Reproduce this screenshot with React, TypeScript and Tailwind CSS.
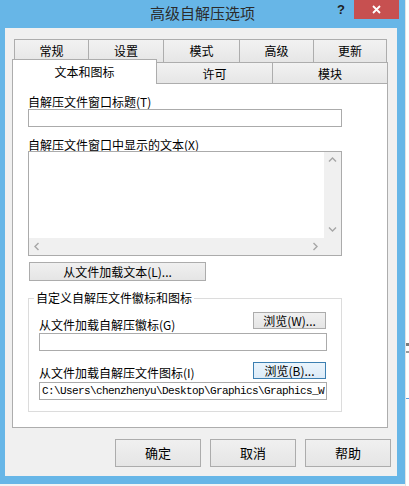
import React from "react";

function Chevron({ dir }: { dir: "up" | "down" | "left" | "right" }) {
  const pts = {
    up: "1,5.5 4.5,2 8,5.5",
    down: "1,2.5 4.5,6 8,2.5",
    left: "5.5,1 2,4.5 5.5,8",
    right: "2.5,1 6,4.5 2.5,8",
  }[dir];
  return (
    <svg width="9" height="9" viewBox="0 0 9 9">
      <polyline points={pts} fill="none" stroke="#a6a6a6" strokeWidth="1.4" />
    </svg>
  );
}

function Label({ children, className = "" }: { children: React.ReactNode; className?: string }) {
  return <div className={`h-[12px] leading-[12px] whitespace-nowrap ${className}`}>{children}</div>;
}

export default function App() {
  return (
    <div className="w-[409px] h-[486px] flex bg-[#f3f3f3] overflow-hidden font-['Noto_Sans_CJK_SC','Noto_Sans',sans-serif] text-[12px] text-black">
      <div className="w-[405px] h-[484px] shrink-0 bg-[#67b6e7] flex flex-col">
        {/* title bar */}
        <div className="h-[28px] shrink-0 grid grid-cols-[1fr_auto_1fr]">
          <div />
          <div className="text-[15px] leading-[17px] pt-[4px] text-[#2b2b2b]">高级自解压选项</div>
          <div className="flex justify-end items-start pr-[6px]">
            <div className="w-[26px] h-[19px] flex items-center justify-center font-['Liberation_Sans',sans-serif] font-bold text-[13px] text-[#1e1e1e]">
              ?
            </div>
            <div className="w-[45px] h-[19px] bg-[#c75050] flex items-center justify-center">
              <svg width="9" height="9" viewBox="0 0 9 9">
                <path d="M1 1 L8 8 M8 1 L1 8" stroke="#ffffff" strokeWidth="1.8" />
              </svg>
            </div>
          </div>
        </div>

        {/* client area */}
        <div className="ml-[5px] w-[392px] h-[448px] bg-[#f0f0f0] flex flex-col">
          {/* back tab row */}
          <div className="ml-[9px] mt-[11px] flex">
            <div className="w-[74px] h-[23px] border-t border-l border-[#adadad] bg-linear-to-b from-[#f2f2f2] to-[#e6e6e6] text-center pt-[5px] leading-[12px]">常规</div>
            <div className="w-[75px] h-[23px] border-t border-l border-[#adadad] bg-linear-to-b from-[#f2f2f2] to-[#e6e6e6] text-center pt-[5px] leading-[12px]">设置</div>
            <div className="w-[76px] h-[23px] border-t border-l border-[#adadad] bg-linear-to-b from-[#f2f2f2] to-[#e6e6e6] text-center pt-[5px] leading-[12px]">模式</div>
            <div className="w-[74px] h-[23px] border-t border-l border-[#adadad] bg-linear-to-b from-[#f2f2f2] to-[#e6e6e6] text-center pt-[5px] leading-[12px]">高级</div>
            <div className="w-[74px] h-[23px] border-t border-l border-r border-[#adadad] bg-linear-to-b from-[#f2f2f2] to-[#e6e6e6] text-center pt-[5px] leading-[12px]">更新</div>
          </div>
          {/* front tab row */}
          <div className="ml-[7px] -mt-[3px] flex items-end relative z-10">
            <div className="w-[145px] h-[25px] -mb-px bg-white border-t border-l border-r border-[#adadad] text-center pt-[6px] leading-[12px]">文本和图标</div>
            <div className="w-[115px] h-[21px] border-t border-[#adadad] bg-linear-to-b from-[#f2f2f2] to-[#e6e6e6] text-center pt-[5px] leading-[12px]">许可</div>
            <div className="w-[116px] h-[21px] border-t border-l border-r border-[#adadad] bg-linear-to-b from-[#f2f2f2] to-[#e6e6e6] text-center pt-[5px] leading-[12px]">模块</div>
          </div>

          {/* tab page */}
          <div className="ml-[7px] w-[376px] h-[345px] shrink-0 bg-white border border-[#adadad] pl-[15px] pt-[12px] flex flex-col items-start">
            <Label>自解压文件窗口标题(T)</Label>
            <div className="mt-[1px] w-[314px] h-[18px] border border-[#ababab] bg-white" />

            <Label className="mt-[12px]">自解压文件窗口中显示的文本(X)</Label>
            <div className="w-[314px] h-[105px] border border-[#ababab] bg-white grid grid-cols-[1fr_17px] grid-rows-[1fr_17px]">
              <div />
              <div className="bg-[#f0f0f0] flex flex-col justify-between">
                <div className="h-[17px] flex items-center justify-center"><Chevron dir="up" /></div>
                <div className="h-[17px] flex items-center justify-center"><Chevron dir="down" /></div>
              </div>
              <div className="bg-[#f0f0f0] flex justify-between">
                <div className="w-[17px] flex items-center justify-center"><Chevron dir="left" /></div>
                <div className="w-[17px] flex items-center justify-center"><Chevron dir="right" /></div>
              </div>
              <div className="bg-[#f0f0f0]" />
            </div>

            <button className="mt-[6px] ml-[1px] w-[177px] h-[19px] border border-[#acacac] bg-linear-to-b from-[#f0f0f0] to-[#e5e5e5] leading-[12px] text-center">
              从文件加载文本(L)...
            </button>

            <fieldset className="mt-[11px] w-[314px] border border-[#dcdcdc]">
              <legend className="ml-[5px] px-[2px] h-[12px] leading-[12px]">自定义自解压文件徽标和图标</legend>
              <div className="pl-[10px] pr-[14px] pb-[11px] flex flex-col">
                <div className="mt-[8px] flex justify-between items-start">
                  <Label className="mt-[7px]">从文件加载自解压徽标(G)</Label>
                  <button className="mr-[1px] w-[73px] h-[17px] border border-[#acacac] bg-linear-to-b from-[#f0f0f0] to-[#e5e5e5] leading-[12px]">
                    浏览(W)...
                  </button>
                </div>
                <div className="mt-[2px] w-[288px] h-[18px] border border-[#ababab] bg-white" />

                <div className="mt-[11px] flex justify-between items-start">
                  <Label className="mt-[5px]">从文件加载自解压文件图标(I)</Label>
                  <button className="mr-[1px] w-[73px] h-[17px] border border-[#3c7fb1] bg-linear-to-b from-[#eaf4fc] to-[#dcebf8] leading-[12px]">
                    浏览(B)...
                  </button>
                </div>
                <div className="mt-[3px] w-[288px] h-[18px] border border-[#ababab] bg-white pl-[2px] overflow-hidden whitespace-nowrap font-['Liberation_Mono',monospace] text-[11px] tracking-[-0.6px] leading-[16px]">
                  {"C:\\Users\\chenzhenyu\\Desktop\\Graphics\\Graphics_W"}
                </div>
              </div>
            </fieldset>
          </div>

          {/* dialog buttons */}
          <div className="mt-[11px] pr-[6px] flex justify-end gap-[9px]">
            <button className="w-[86px] h-[28px] border border-[#acacac] bg-linear-to-b from-[#f0f0f0] to-[#e5e5e5] text-[13px]">确定</button>
            <button className="w-[86px] h-[28px] border border-[#acacac] bg-linear-to-b from-[#f0f0f0] to-[#e5e5e5] text-[13px]">取消</button>
            <button className="w-[86px] h-[28px] border border-[#acacac] bg-linear-to-b from-[#f0f0f0] to-[#e5e5e5] text-[13px]">帮助</button>
          </div>
        </div>
      </div>

      {/* sliver of the window behind */}
      <div className="flex-1 bg-white border-l border-[#e3e3e3] flex flex-col">
        <div className="h-[343px]" />
        <div className="h-[3px] bg-[#7d7d7d]" />
        <div className="h-[5px]" />
        <div className="h-[2px] bg-[#9a9a9a]" />
        <div className="h-[45px]" />
        <div className="h-px bg-[#5aa0e0]" />
      </div>
    </div>
  );
}
